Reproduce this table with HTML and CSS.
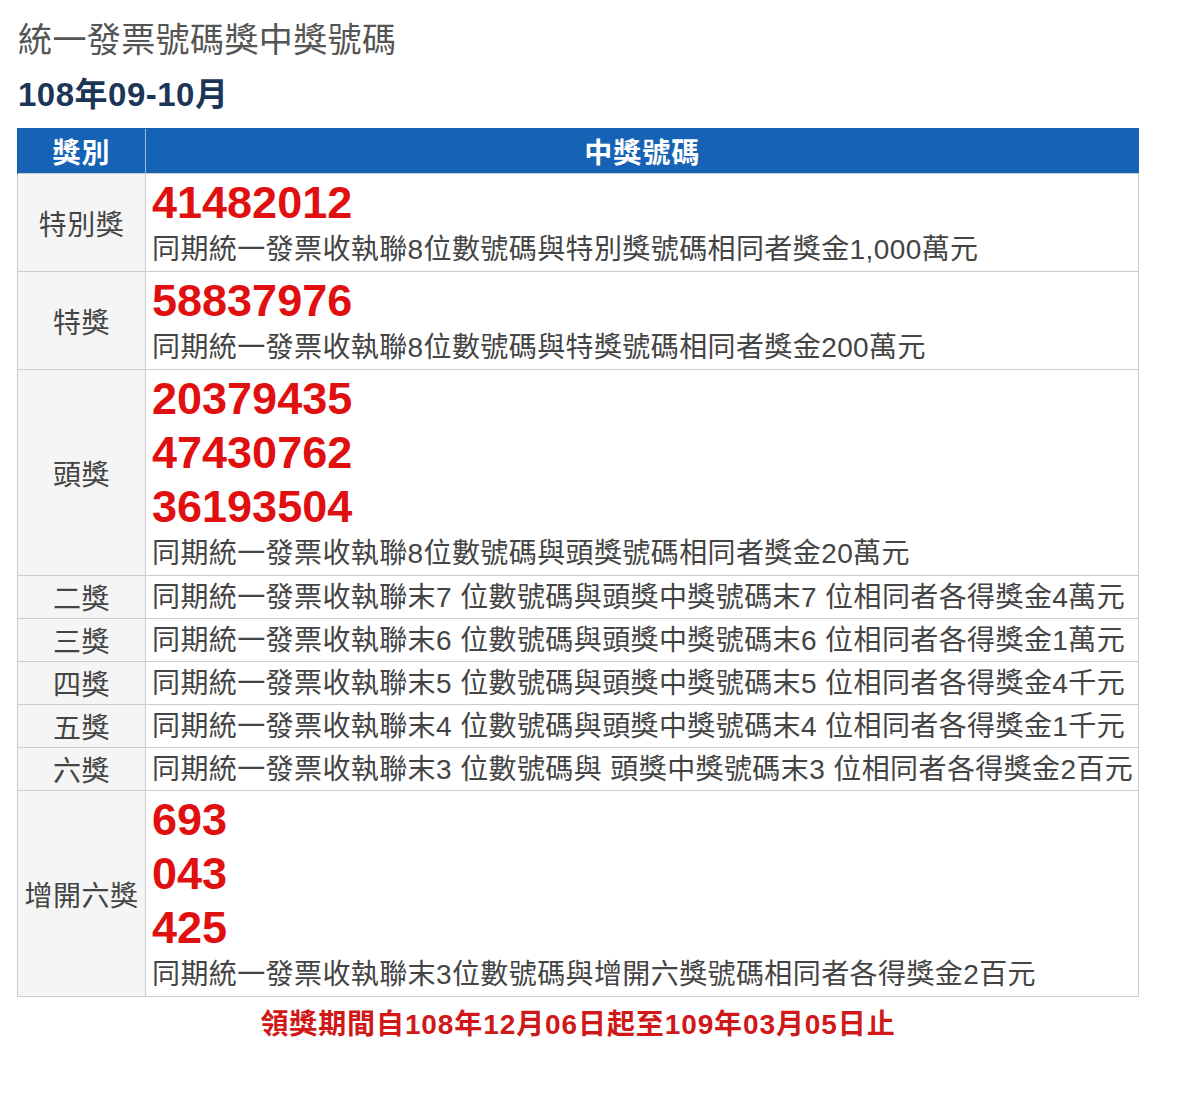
FILE: index.html
```html
<!DOCTYPE html>
<html lang="zh-Hant">
<head>
  <meta charset="utf-8" />
  <title>統一發票號碼獎中獎號碼</title>
  <link rel="stylesheet" href="styles.css">
</head>
<body>
  <h1 class="page-title">統一發票號碼獎中獎號碼</h1>
  <h2 class="period">108年09-10月</h2>

  <table class="prize-table">
    <colgroup>
      <col class="name-col">
      <col>
    </colgroup>
    <thead>
      <tr>
        <th class="col-name">獎別</th>
        <th>中獎號碼</th>
      </tr>
    </thead>
    <tbody>
      <tr>
        <td class="col-name">特別獎</td>
        <td>
          <div class="num">41482012</div>
          <div class="desc">同期統一發票收執聯8位數號碼與特別獎號碼相同者獎金1,000萬元</div>
        </td>
      </tr>
      <tr>
        <td class="col-name">特獎</td>
        <td>
          <div class="num">58837976</div>
          <div class="desc">同期統一發票收執聯8位數號碼與特獎號碼相同者獎金200萬元</div>
        </td>
      </tr>
      <tr>
        <td class="col-name">頭獎</td>
        <td>
          <div class="num">20379435</div>
          <div class="num">47430762</div>
          <div class="num">36193504</div>
          <div class="desc">同期統一發票收執聯8位數號碼與頭獎號碼相同者獎金20萬元</div>
        </td>
      </tr>
      <tr class="simple">
        <td class="col-name">二獎</td>
        <td><div class="desc">同期統一發票收執聯末7 位數號碼與頭獎中獎號碼末7 位相同者各得獎金4萬元</div></td>
      </tr>
      <tr class="simple">
        <td class="col-name">三獎</td>
        <td><div class="desc">同期統一發票收執聯末6 位數號碼與頭獎中獎號碼末6 位相同者各得獎金1萬元</div></td>
      </tr>
      <tr class="simple">
        <td class="col-name">四獎</td>
        <td><div class="desc">同期統一發票收執聯末5 位數號碼與頭獎中獎號碼末5 位相同者各得獎金4千元</div></td>
      </tr>
      <tr class="simple">
        <td class="col-name">五獎</td>
        <td><div class="desc">同期統一發票收執聯末4 位數號碼與頭獎中獎號碼末4 位相同者各得獎金1千元</div></td>
      </tr>
      <tr class="simple">
        <td class="col-name">六獎</td>
        <td><div class="desc">同期統一發票收執聯末3 位數號碼與 頭獎中獎號碼末3 位相同者各得獎金2百元</div></td>
      </tr>
      <tr>
        <td class="col-name">增開六獎</td>
        <td>
          <div class="num">693</div>
          <div class="num">043</div>
          <div class="num">425</div>
          <div class="desc">同期統一發票收執聯末3位數號碼與增開六獎號碼相同者各得獎金2百元</div>
        </td>
      </tr>
    </tbody>
  </table>

  <p class="claim-period">領獎期間自108年12月06日起至109年03月05日止</p>
</body>
</html>
```

FILE: styles.css
```css
body {
  margin: 0;
  padding: 20px 17px;
  background-color: #fff;
  color: #333;
  font-family: "Liberation Sans", "Noto Sans CJK TC", sans-serif;
}
.page-title {
  margin: 0;
  font-size: 34px;
  font-weight: normal;
  line-height: 40px;
  letter-spacing: 0.4px;
  color: #555;
  padding-left: 1px;
}
.period {
  margin: 15px 0 0;
  font-size: 33px;
  line-height: 40px;
  letter-spacing: 0.5px;
  color: #1d3557;
  padding-left: 1px;
}
.prize-table {
  margin-top: 13px;
  width: 1122px;
  table-layout: fixed;
  border-collapse: collapse;
  font-size: 28px;
}
.name-col {
  width: 128px;
}
.prize-table th {
  background-color: #1662b4;
  color: #fff;
  font-weight: bold;
  letter-spacing: 1px;
  height: 44px;
  padding: 0;
  border-left: 1px solid #9bbde3;
  border-top: 1px solid #1662b4;
}
.prize-table th:first-child {
  border-left-color: #1662b4;
}
.prize-table td {
  border: 1px solid #ccc;
  padding: 2px 6px;
  vertical-align: middle;
  color: #444;
}
.prize-table td.col-name {
  padding-left: 0;
  padding-right: 0;
  text-align: center;
  white-space: nowrap;
  background-color: #f5f5f5;
  letter-spacing: 0.5px;
}
.prize-table tr.simple td {
  padding-top: 1px;
  padding-bottom: 1px;
}
.num {
  font-size: 45px;
  line-height: 54px;
  font-weight: bold;
  color: #e01010;
}
.desc {
  line-height: 39px;
  letter-spacing: 0.4px;
  white-space: nowrap;
}
.claim-period {
  width: 1122px;
  margin: 10px 0 0;
  text-align: center;
  font-size: 28px;
  line-height: 36px;
  font-weight: bold;
  letter-spacing: 0.9px;
  color: #d01818;
}
```
